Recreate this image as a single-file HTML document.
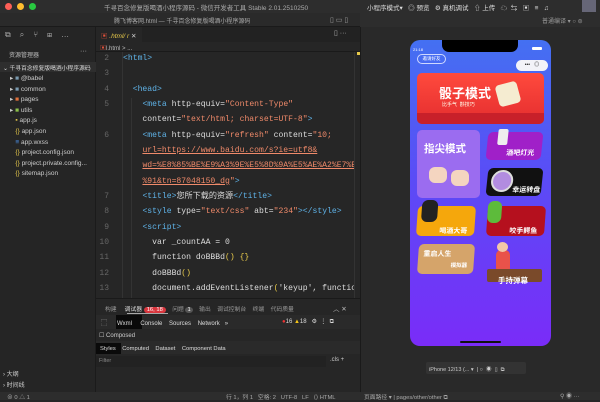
<!DOCTYPE html>
<html><head><meta charset="utf-8"><style>
*{margin:0;padding:0;box-sizing:border-box}
body{width:600px;height:400px;overflow:hidden;background:#262626;font-family:"Liberation Sans","Noto Sans CJK SC",sans-serif;color:#ccc;position:relative;font-size:7px}
.a{position:absolute;white-space:nowrap}
.code{font-family:"Liberation Mono","Noto Sans CJK SC",monospace;font-size:8.1px;color:#ddd}
.t{color:#5fb3e8}.s{color:#f08a6a}.u{color:#f08a6a;text-decoration:underline}.y{color:#e6c84a}
.ln{color:#666;font-family:"Liberation Mono",monospace;font-size:8px;width:20px;text-align:right}
.card{position:absolute;border-radius:5px}
.ct{position:absolute;color:#fff;font-weight:bold;font-size:8px}
</style></head><body>
<div class="a" style="left:0;top:0;width:600px;height:13px;background:#2d2d2d"></div>
<div class="a" style="left:0;top:13px;width:360px;height:14px;background:#2a2a2a;border-bottom:1px solid #1a1a1a"></div>
<div class="a" style="left:360px;top:13px;width:240px;height:14px;background:#2d2d2d"></div>
<div class="a" style="left:5px;top:3px;width:7px;height:7px;border-radius:50%;background:#fe5f57"></div>
<div class="a" style="left:17px;top:3px;width:7px;height:7px;border-radius:50%;background:#febc2e"></div>
<div class="a" style="left:29px;top:3px;width:7px;height:7px;border-radius:50%;background:#28c840"></div>
<div class="a" style="left:104px;top:2px;font-size:6.5px;color:#aaa">千寻百念修复版喝酒小程序源码 - 微信开发者工具 Stable 2.01.2510250</div>
<div class="a" style="left:114px;top:16px;font-size:6px;color:#aaa">腾飞博客网.html — 千寻百念修复版喝酒小程序源码</div>
<div class="a" style="left:367px;top:2px;font-size:6.5px;color:#ddd">小程序模式▾ &nbsp; ◎ 预览 &nbsp; ⚙ 真机调试 &nbsp; ⇧ 上传 &nbsp; ☁ &nbsp;⇆ &nbsp; ▣ &nbsp; ≡ &nbsp; ♫</div>
<div class="a" style="left:582px;top:0;width:14px;height:12px;background:#667"></div>
<div class="a" style="left:330px;top:16px;font-size:7px;color:#999">▯ ▭ ▯</div>
<div class="a" style="left:542px;top:16px;font-size:6px;color:#999">普通编译 ▾ ○ ⊜</div>
<div class="a" style="left:0;top:27px;width:96px;height:365px;background:#252525;border-right:1px solid #1b1b1b"></div>
<div class="a" style="left:5px;top:30px;font-size:8px;color:#aaa;letter-spacing:9px">⧉⌕⑂⊞…</div>
<div class="a" style="left:9px;top:50px;font-size:6px;color:#bbb">资源管理器</div>
<div class="a" style="left:80px;top:48px;color:#bbb">···</div>
<div class="a" style="left:0;top:62px;width:96px;height:10px;background:#2e2e2e"></div>
<div class="a" style="left:3px;top:63px;font-size:5.8px;color:#ddd">⌄ 千寻百念修复版喝酒小程序源码</div>
<div class="a" style="left:10px;top:74px;font-size:6.5px;line-height:10.6px;color:#ccc">
▸ <span style="color:#7a9ab0">■</span> @babel<br>▸ <span style="color:#7a9ab0">■</span> common<br>▸ <span style="color:#e0703a">■</span> pages<br>▸ <span style="color:#8cc04a">■</span> utils<br>&nbsp;&nbsp; <span style="color:#e6c84a">▪</span> app.js<br>&nbsp;&nbsp; <span style="color:#e6c84a">{}</span> app.json<br>&nbsp;&nbsp; <span style="color:#4a90e8">≡</span> app.wxss<br>&nbsp;&nbsp; <span style="color:#e6c84a">{}</span> project.config.json<br>&nbsp;&nbsp; <span style="color:#e6c84a">{}</span> project.private.config...<br>&nbsp;&nbsp; <span style="color:#e6c84a">{}</span> sitemap.json</div>
<div class="a" style="left:3px;top:370px;font-size:6px;color:#ccc;line-height:11px">› 大纲<br>› 时间线</div>
<div class="a" style="left:96px;top:27px;width:264px;height:15px;background:#222"></div>
<div class="a" style="left:96px;top:27px;width:46px;height:15px;background:#262626"></div>
<div class="a" style="left:101px;top:30px;font-size:6.5px;color:#e6c84a;font-style:italic"><span style="color:#e0503a;font-style:normal">▣</span> .html/ r <span style="color:#ccc;font-style:normal">✕</span></div>
<div class="a" style="left:334px;top:29px;font-size:7px;color:#aaa">▯ ···</div>
<div class="a" style="left:100px;top:43px;font-size:6px;color:#bbb"><span style="color:#e0503a">▣</span>l.html &gt; ...</div>
<div class="a" style="left:96px;top:51px;width:264px;height:1px;background:#1a1a1a"></div>
<div class="a" style="left:122px;top:52px;width:1px;height:246px;background:#333"></div>
<div class="a" style="left:131px;top:98px;width:1px;height:200px;background:#333"></div>
<div class="a" style="left:357px;top:52px;width:3px;height:3px;background:#e6c84a"></div>
<div class="a ln" style="left:89px;top:51px;line-height:15.35px">2<br>3<br>4<br>5<br><br>6<br><br><br><br>7<br>8<br>9<br>10<br>11<br>12<br>13</div>
<div class="a" style="left:123px;top:51px;width:232px;height:247px;overflow:hidden">
<div class="a code" style="left:0;top:0;line-height:15.35px">
<span class="t">&lt;html&gt;</span><br><br>
&nbsp;&nbsp;<span class="t">&lt;head&gt;</span><br>
&nbsp;&nbsp;&nbsp;&nbsp;<span class="t">&lt;meta</span> http-equiv=<span class="s">"Content-Type"</span><br>
&nbsp;&nbsp;&nbsp;&nbsp;content=<span class="s">"text/html; charset=UTF-8"</span><span class="t">&gt;</span><br>
&nbsp;&nbsp;&nbsp;&nbsp;<span class="t">&lt;meta</span> http-equiv=<span class="s">"refresh"</span> content=<span class="s">"10;</span><br>
&nbsp;&nbsp;&nbsp;&nbsp;<span class="u">url=https://www.baidu.com/s?ie=utf8&amp;</span><br>
&nbsp;&nbsp;&nbsp;&nbsp;<span class="u">wd=%E8%85%BE%E9%A3%9E%E5%8D%9A%E5%AE%A2%E7%BD</span><br>
&nbsp;&nbsp;&nbsp;&nbsp;<span class="u">%91&amp;tn=87048150_dg</span><span class="s">"</span><span class="t">&gt;</span><br>
&nbsp;&nbsp;&nbsp;&nbsp;<span class="t">&lt;title&gt;</span>您所下载的资源<span class="t">&lt;/title&gt;</span><br>
&nbsp;&nbsp;&nbsp;&nbsp;<span class="t">&lt;style</span> type=<span class="s">"text/css"</span> abt=<span class="s">"234"</span><span class="t">&gt;&lt;/style&gt;</span><br>
&nbsp;&nbsp;&nbsp;&nbsp;<span class="t">&lt;script&gt;</span><br>
&nbsp;&nbsp;&nbsp;&nbsp;&nbsp;&nbsp;var _countAA = 0<br>
&nbsp;&nbsp;&nbsp;&nbsp;&nbsp;&nbsp;function doBBBd<span class="y">()</span> <span class="y">{}</span><br>
&nbsp;&nbsp;&nbsp;&nbsp;&nbsp;&nbsp;doBBBd<span class="y">()</span><br>
&nbsp;&nbsp;&nbsp;&nbsp;&nbsp;&nbsp;document.addEventListener<span class="y">(</span>'keyup', function</div>
</div>
<div class="a" style="left:354px;top:52px;width:1px;height:246px;background:#333"></div>
<div class="a" style="left:96px;top:298px;width:264px;height:94px;background:#262626;border-top:1px solid #1a1a1a"></div>
<div class="a" style="left:105px;top:304px;font-size:5.8px;color:#999">构建 &nbsp;&nbsp;&nbsp; <span style="color:#ddd">调试器</span> <span style="background:#d9363e;color:#fff;border-radius:5px;padding:0 3px">16, 18</span> &nbsp;&nbsp; 问题 <span style="background:#555;color:#fff;border-radius:50%;padding:0 2px">1</span> &nbsp;&nbsp; 输出 &nbsp;&nbsp; 调试控制台 &nbsp;&nbsp; 终端 &nbsp;&nbsp; 代码质量</div>
<div class="a" style="left:127px;top:313px;width:41px;height:1px;background:#aaa"></div>
<div class="a" style="left:333px;top:303px;font-size:6.5px;color:#bbb">︿ ✕</div>
<div class="a" style="left:96px;top:315px;width:264px;height:14px;background:#2a2a2a"></div>
<div class="a" style="left:116px;top:315px;width:26px;height:14px;background:#0a0a0a"></div>
<div class="a" style="left:101px;top:318px;font-size:6px;color:#ddd">⬚ &nbsp;&nbsp;&nbsp;&nbsp; Wxml &nbsp;&nbsp;&nbsp; Console &nbsp;&nbsp; Sources &nbsp;&nbsp; Network &nbsp; »</div>
<div class="a" style="left:282px;top:318px;font-size:6px;color:#ddd"><span style="color:#e33">●</span>16 <span style="color:#f5c518">▲</span>18 &nbsp; ⚙ &nbsp;⋮ &nbsp;⧉</div>
<div class="a" style="left:99px;top:332px;font-size:6px;color:#ccc">☐ Composed</div>
<div class="a" style="left:96px;top:341px;width:264px;height:13px;background:#2a2a2a"></div>
<div class="a" style="left:96px;top:343px;width:25px;height:11px;background:#0a0a0a"></div>
<div class="a" style="left:100px;top:346px;font-size:5.8px;color:#ddd">Styles &nbsp;&nbsp;&nbsp;Computed &nbsp;&nbsp; Dataset &nbsp;&nbsp; Component Data</div>
<div class="a" style="left:96px;top:356px;width:230px;height:11px;background:#222"></div>
<div class="a" style="left:99px;top:358px;font-size:5.5px;color:#888">Filter</div>
<div class="a" style="left:330px;top:357px;font-size:6px;color:#ccc">.cls +</div>
<div class="a" style="left:0;top:392px;width:600px;height:8px;background:#2d2d2d"></div>
<div class="a" style="left:7px;top:392px;font-size:5.8px;color:#aaa">⊗ 0 △ 1</div>
<div class="a" style="left:226px;top:392px;font-size:5.8px;color:#aaa">行 1，列 1 &nbsp; 空格: 2 &nbsp; UTF-8 &nbsp; LF &nbsp; ⟨⟩ HTML</div>
<div class="a" style="left:364px;top:392px;font-size:5.8px;color:#aaa">页面路径 ▾ | pages/other/other ⧉</div>
<div class="a" style="left:560px;top:391px;font-size:6px;color:#aaa">⚲ ◉ ···</div>
<div class="a" style="left:360px;top:27px;width:240px;height:365px;background:#292929;border-left:1px solid #1a1a1a"></div>
<div class="a" style="left:426px;top:362px;width:100px;height:12px;background:#333;border-radius:2px"></div>
<div class="a" style="left:429px;top:365px;font-size:5.5px;color:#ccc">iPhone 12/13 (... ▾ &nbsp;| ○ &nbsp;◉ &nbsp;▯ &nbsp;⧉</div>
<div class="a" style="left:410px;top:40px;width:141px;height:306px;border-radius:10px;background:linear-gradient(180deg,#4470f2 0%,#5a4cf6 45%,#7a2cf8 100%);overflow:hidden">
 <div class="a" style="left:32px;top:0;width:76px;height:12px;background:#000;border-radius:0 0 7px 7px"></div>
 <div class="a" style="left:3px;top:7px;font-size:4px;color:#fff">21:18</div>
 <div class="a" style="left:122px;top:7px;width:10px;height:3px;background:#fff;border-radius:1px"></div>
 <div class="a" style="left:7px;top:14px;width:29px;height:10px;border:1px solid #cfd8ff;border-radius:6px;font-size:4.5px;color:#fff;text-align:center;line-height:8px">邀请好友</div>
 <div class="a" style="left:106px;top:20px;width:32px;height:11px;background:#f3f3f8;border-radius:6px;font-size:5px;color:#222;line-height:11px;text-align:center">•••&nbsp;&nbsp; ◎</div>
 <div class="card" style="left:7px;top:33px;width:127px;height:51px;background:linear-gradient(#ff4a3d,#e42d2f);border-radius:5px">
  <div class="ct" style="left:22px;top:10px;font-size:13px">骰子模式</div>
  <div class="ct" style="left:25px;top:28px;font-size:5px;color:#ffe;font-weight:normal">比手气 &nbsp;斟技巧</div>
  <div class="a" style="left:80px;top:10px;width:22px;height:22px;background:#f5ecd1;border-radius:4px;transform:rotate(-15deg)"></div>
  <div class="a" style="left:0;top:40px;width:127px;height:11px;background:#c8202a;border-radius:0 0 5px 5px"></div>
 </div>
 <div class="card" style="left:7px;top:90px;width:63px;height:68px;background:#9b6cf0">
  <div class="ct" style="left:7px;top:11px;font-size:10.5px">指尖模式</div>
  <div class="a" style="left:12px;top:37px;width:18px;height:16px;background:#f4d5c0;border-radius:6px"></div>
  <div class="a" style="left:34px;top:40px;width:18px;height:16px;background:#f4d5c0;border-radius:6px"></div>
 </div>
 <div class="card" style="left:77px;top:92px;width:55px;height:28px;background:#a020c8;transform:skewX(-6deg)"><div class="ct" style="left:20px;top:16px;font-size:7px">酒吧灯光</div><div class="a" style="left:10px;top:-3px;width:10px;height:16px;background:#eee;border-radius:2px"></div></div>
 <div class="card" style="left:77px;top:128px;width:55px;height:28px;background:#111;transform:skewX(-6deg)"><div class="a" style="left:4px;top:2px;width:22px;height:22px;border-radius:50%;background:#b28ce0;border:2px solid #ddd"></div><div class="ct" style="left:26px;top:17px;font-size:7px">幸运转盘</div></div>
 <div class="card" style="left:7px;top:166px;width:58px;height:30px;background:#f5a70c;transform:skewX(-4deg)"><div class="a" style="left:4px;top:-6px;width:16px;height:22px;background:#222;border-radius:6px"></div><div class="ct" style="left:23px;top:20px;font-size:7px">喝酒大哥</div></div>
 <div class="card" style="left:77px;top:166px;width:58px;height:30px;background:#b5101e;transform:skewX(-4deg)"><div class="a" style="left:0;top:-5px;width:14px;height:22px;background:#5dbb3b;border-radius:6px"></div><div class="ct" style="left:23px;top:20px;font-size:7px">咬手鳄鱼</div></div>
 <div class="card" style="left:8px;top:204px;width:56px;height:30px;background:#d5a46a;transform:skewX(-4deg)"><div class="ct" style="left:5px;top:5px;font-size:7px">重启人生</div><div class="ct" style="left:33px;top:17px;font-size:5.5px">模拟器</div></div>
 <div class="a" style="left:86px;top:210px;width:14px;height:20px;background:#e9524a;border-radius:5px 5px 2px 2px"></div>
 <div class="a" style="left:87px;top:202px;width:11px;height:10px;background:#f2c8a8;border-radius:50%"></div>
 <div class="card" style="left:77px;top:229px;width:55px;height:13px;background:#7a4a2a;border-radius:2px"></div>
 <div class="ct" style="left:88px;top:235px;font-size:7.5px">手持弹幕</div>
 <div class="a" style="left:50px;top:301px;width:41px;height:1.5px;background:#111;border-radius:1px"></div>
</div>
</body></html>
